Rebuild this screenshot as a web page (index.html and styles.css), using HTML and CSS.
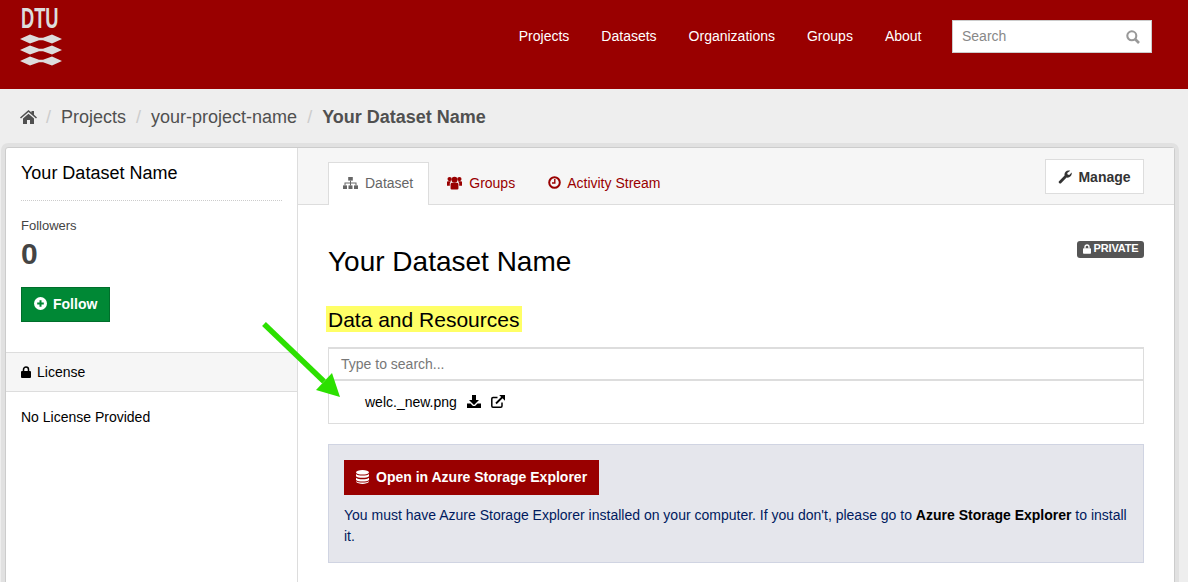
FILE: index.html
```html
<!DOCTYPE html>
<html lang="en">
<head>
  <meta charset="UTF-8" />
  <title>Your Dataset Name</title>
  <link rel="stylesheet" href="styles.css">
</head>
<body>

<header class="masthead">
  <a class="logo" href="#">
    <span class="logo-text">DTU</span>
    <svg class="logo-waves" width="42" height="32" viewBox="0 0 42 32">
      <path d="M0 5 L10 0.4 L19 3.8 H23 L32 0.4 L42 5 L32 9.6 L23 6.2 H19 L10 9.6 Z"/>
      <path d="M0 16 L10 11.4 L19 14.8 H23 L32 11.4 L42 16 L32 20.6 L23 17.2 H19 L10 20.6 Z"/>
      <path d="M0 27 L10 22.4 L19 25.8 H23 L32 22.4 L42 27 L32 31.6 L23 28.2 H19 L10 31.6 Z"/>
    </svg>
  </a>
  <nav class="main-nav">
    <a href="#">Projects</a>
    <a href="#">Datasets</a>
    <a href="#">Organizations</a>
    <a href="#">Groups</a>
    <a href="#">About</a>
  </nav>
  <div class="site-search">
    <span class="site-search-text">Search</span>
    <svg class="site-search-icon" width="14" height="14" viewBox="0 0 14 14" fill="none" stroke="#999" stroke-width="2.1"><circle cx="5.8" cy="5.8" r="4.5"/><path d="M9 9 L13 13" stroke-width="2.6"/></svg>
  </div>
</header>

<div class="toolbar">
  <svg class="home" width="17" height="14" viewBox="0 0 17 14" fill="#505050"><path d="M8.5 0 L11.5 2.6 V1 H14 V4.8 L17 7.4 L16 8.5 L8.5 2 L1 8.5 L0 7.4 Z"/><path d="M3 8.6 L8.5 3.8 L14 8.6 V14 H10 V10 H7 V14 H3 Z"/></svg>
  <span class="sep">/</span>
  <a href="#">Projects</a>
  <span class="sep">/</span>
  <a href="#">your-project-name</a>
  <span class="sep">/</span>
  <a href="#" class="active">Your Dataset Name</a>
</div>

<div class="wrapper">
  <aside class="sidebar">
    <div class="side-top">
      <h2 class="side-title">Your Dataset Name</h2>
      <div class="followers-label">Followers</div>
      <div class="followers-count">0</div>
      <a class="btn-follow" href="#">
        <svg width="13" height="13" viewBox="0 0 13 13"><circle cx="6.5" cy="6.5" r="6.5" fill="#fff"/><path d="M3.2 6.5 H9.8 M6.5 3.2 V9.8" stroke="#008835" stroke-width="2"/></svg>
        Follow
      </a>
    </div>
    <div class="side-band">
      <svg width="10" height="12" viewBox="0 0 10 12"><path d="M2.5 5.5 V3.5 a2.5 2.5 0 0 1 5 0 V5.5" fill="none" stroke="#000" stroke-width="1.5"/><rect y="5" width="10" height="7" rx="1"/></svg>
      License
    </div>
    <p class="side-text">No License Provided</p>
  </aside>

  <main class="primary">
    <div class="tabs-bar">
      <ul class="tabs">
        <li class="tab active">
          <svg width="15" height="12" viewBox="0 0 15 12" fill="#666"><rect x="5.2" y="0" width="4.6" height="3.6"/><rect x="0" y="8.4" width="4" height="3.6"/><rect x="5.5" y="8.4" width="4" height="3.6"/><rect x="11" y="8.4" width="4" height="3.6"/><path d="M7 3.6 H8 V5.4 H13.5 V8.4 H12.5 V6.4 H8 V8.4 H7 V6.4 H2.5 V8.4 H1.5 V5.4 H7 Z"/></svg>
          Dataset
        </li>
        <li class="tab tab-groups">
          <svg width="15" height="14" viewBox="0 0 16 14" fill="#990000"><circle cx="8" cy="3.4" r="3.2"/><circle cx="2.8" cy="2.8" r="2.3"/><circle cx="13.2" cy="2.8" r="2.3"/><path d="M3.8 8 Q4 6.6 5.5 6.6 H10.5 Q12 6.6 12.2 8 V12.8 Q12.2 14 11 14 H5 Q3.8 14 3.8 12.8 Z"/><path d="M0 6 Q0 5.2 1 5.2 H4.2 L3 7.2 V10 H0 Z M16 6 Q16 5.2 15 5.2 H11.8 L13 7.2 V10 H16 Z"/></svg>
          Groups
        </li>
        <li class="tab">
          <svg width="13" height="13" viewBox="0 0 13 13" fill="none" stroke="#990000"><circle cx="6.5" cy="6.5" r="5.3" stroke-width="2"/><path d="M6.8 3 V7 H4" stroke-width="1.4"/></svg>
          Activity Stream
        </li>
      </ul>
      <a class="btn-manage" href="#">
        <svg width="14" height="14" viewBox="0 0 14 14"><path d="M0.8 11.4 L6.6 5.6 C6 3 7.8 0.4 10.6 0.4 C11.2 0.4 11.8 0.5 12.2 0.8 L9.2 2.9 L9.6 4.6 L11.2 5 L13.7 2.6 C14.2 5.4 11.8 8.2 8.6 7.6 L2.8 13.4 C2 14 0.2 13 0.8 11.4 Z" fill="#333"/></svg>
        Manage
      </a>
    </div>

    <div class="content">
      <div class="title-row">
        <h1>Your Dataset Name</h1>
        <span class="badge">
          <svg width="8" height="10" viewBox="0 0 10 12" fill="#fff"><path d="M2.5 5.5 V3.5 a2.5 2.5 0 0 1 5 0 V5.5" fill="none" stroke="#fff" stroke-width="1.7"/><rect y="5" width="10" height="7" rx="1"/></svg>
          PRIVATE
        </span>
      </div>

      <h3 class="section-title"><span class="highlight">Data and Resources</span></h3>

      <div class="resource-search">Type to search...</div>
      <div class="resource-row">
        <span>welc._new.png</span>
        <svg class="res-icon" width="14" height="13" viewBox="0 0 14 13"><path d="M5 0 H9 V5 H12 L7 10 L2 5 H5 Z"/><path d="M0 8.5 H3.5 L6 11 H8 L10.5 8.5 H14 V13 H0 Z"/></svg>
        <svg class="res-icon" width="14" height="13" viewBox="0 0 14 13" fill="none" stroke="#000"><path d="M11 7.5 V11 Q11 12.2 9.8 12.2 H2 Q0.8 12.2 0.8 11 V3.8 Q0.8 2.6 2 2.6 H6.5" stroke-width="1.5"/><path d="M5 8.5 L12 1.5" stroke-width="1.8"/><path d="M8.2 0 H14 V5.8 Z" fill="#000" stroke="none"/></svg>
      </div>

      <div class="azure-box">
        <a class="btn-azure" href="#">
          <svg width="13" height="14" viewBox="0 0 13 14" fill="#fff"><ellipse cx="6.5" cy="2.3" rx="6.5" ry="2.3"/><path d="M0 4 C2 6 11 6 13 4 V6.3 C11 8.3 2 8.3 0 6.3 Z"/><path d="M0 7.8 C2 9.8 11 9.8 13 7.8 V10 C11 12 2 12 0 10 Z"/><path d="M0 11.2 C2 13 11 13 13 11.2 V11.8 C11 14.6 2 14.6 0 11.8 Z"/></svg>
          Open in Azure Storage Explorer
        </a>
        <p>You must have Azure Storage Explorer installed on your computer. If you don't, please go to <a href="#">Azure Storage Explorer</a> to install it.</p>
      </div>
    </div>
  </main>
</div>

<svg class="arrow" width="90" height="90" viewBox="0 0 90 90">
  <path d="M4 4 L64 61.5" stroke="#2ce000" stroke-width="5.5" fill="none"/>
  <path d="M80 77 L56 70 L72 53 Z" fill="#2ce000"/>
</svg>

</body>
</html>
```

FILE: styles.css
```css
html, body { margin: 0; height: 582px; overflow: hidden; }
body { font-family: "Liberation Sans", Arial, sans-serif; font-size: 14px; line-height: 20px; background-color: #eee; color: #000; position: relative; }
a { color: inherit; text-decoration: none; }

.masthead { height: 89px; background-color: #990000; display: flex; align-items: flex-start; padding: 0 36px 0 20px; box-sizing: border-box; }
.logo { width: 42px; display: block; color: #ddd; }
.logo-text { display: block; font-size: 29px; font-weight: bold; line-height: 30px; padding-top: 3px; height: 30px; transform: scaleX(0.63); transform-origin: left; margin-left: 1px; white-space: nowrap; }
.logo-waves { display: block; margin-top: 1px; fill: #ddd; }
.main-nav { margin-left: auto; display: flex; gap: 32px; color: #fff; padding-top: 26px; }
.site-search { width: 200px; height: 33px; box-sizing: border-box; margin: 20px 0 0 30.5px; background: #fff; border: 1px solid #ccc; display: flex; align-items: center; justify-content: space-between; padding: 0 11px 1px 9px; color: #888; }
.site-search-icon { margin-top: 2px; }

.toolbar { height: 58px; display: flex; align-items: center; padding: 0 0 2px 20px; box-sizing: border-box; font-size: 18px; color: #505050; }
.toolbar .home { margin-right: -1px; }
.toolbar .sep { color: #ccc; margin: 0 10px; }
.toolbar .active { font-weight: bold; }

.wrapper { margin-left: 5px; width: 1168px; height: 440px; background: #fff; border: 1px solid #ccc; border-radius: 3px 3px 0 0; box-shadow: 0 0 0 4px rgba(0, 0, 0, 0.05); display: flex; }
.sidebar { width: 291px; border-right: 1px solid #ddd; flex-shrink: 0; }
.side-top { padding: 15px 15px 30px; height: 159px; }
.side-title { margin: 0 0 15px; padding-bottom: 17px; font-size: 18px; font-weight: normal; line-height: 20px; border-bottom: 1px dotted #ccc; }
.followers-label { color: #444; font-size: 13px; line-height: 20px; }
.followers-count { font-size: 30px; font-weight: bold; color: #444; line-height: 35px; }
.btn-follow { display: inline-flex; align-items: center; gap: 6px; margin-top: 16px; height: 35px; box-sizing: border-box; padding: 0 12px 2px; background: #008835; border: 1px solid #006e2b; color: #fff; font-weight: bold; }
.side-band { height: 40px; box-sizing: border-box; background: #f6f6f6; border-top: 1px solid #ddd; border-bottom: 1px solid #ddd; padding-left: 15px; display: flex; align-items: center; gap: 6px; }
.side-text { margin: 15px 15px 0; }

.primary { flex: 1; }
.tabs-bar { height: 57px; box-sizing: border-box; background: #f6f6f6; border-bottom: 1px solid #ddd; display: flex; justify-content: space-between; padding: 11px 30px 0; }
.tabs { list-style: none; margin: 3px 0 -1px; padding: 0; display: flex; }
.tab { height: 43px; box-sizing: border-box; padding: 0 15px 3px 17px; display: flex; align-items: center; gap: 6px; color: #990000; border: 1px solid transparent; border-bottom: 0; }
.tab.active { color: #666; background: #fff; border-color: #ddd; padding-left: 14px; gap: 7px; }
.tab-groups { gap: 7px; padding-right: 14px; }
.btn-manage { height: 35px; width: 99px; box-sizing: border-box; background: #fff; border: 1px solid #ddd; display: flex; align-items: center; justify-content: center; gap: 6px; font-weight: bold; color: #333; }

.content { padding: 0 30px; }
.title-row { display: flex; justify-content: space-between; align-items: flex-start; padding-top: 36px; height: 101px; box-sizing: border-box; }
h1 { margin: 1px 0 0; font-size: 28px; font-weight: normal; line-height: 40px; }
.badge { height: 17px; width: 67px; box-sizing: border-box; padding-bottom: 2px; background: #555; color: #fff; border-radius: 3px; font-size: 11px; font-weight: bold; line-height: 15px; letter-spacing: -0.15px; display: flex; justify-content: center; align-items: center; gap: 3px; }
.section-title { margin: 0 0 15px; font-size: 21px; font-weight: normal; line-height: 25px; }
.highlight { display: inline-block; background: #ffff66; margin-left: -2px; padding: 1px 3px 0 2px; }

.resource-search { height: 34px; box-sizing: border-box; border: 1px solid #ddd; border-width: 2px 1px; padding-left: 12px; color: #777; line-height: 30px; }
.resource-row { height: 43px; box-sizing: border-box; border: 1px solid #ddd; border-top: 0; padding: 0 0 1px 36px; display: flex; align-items: center; gap: 10px; }
.res-icon { flex-shrink: 0; }

.azure-box { margin-top: 20px; height: 119px; box-sizing: border-box; background: #e5e6ec; border: 1px solid #d0d4e2; padding: 15px; color: #001a5e; }
.btn-azure { display: inline-flex; align-items: center; gap: 7px; height: 35px; box-sizing: border-box; padding: 0 12px 2px; background: #990000; color: #fff; font-weight: bold; }
.azure-box p { margin: 10px 0 0; line-height: 21px; }
.azure-box p a { color: #000; font-weight: bold; }

.arrow { position: absolute; left: 260px; top: 320px; pointer-events: none; }
```
